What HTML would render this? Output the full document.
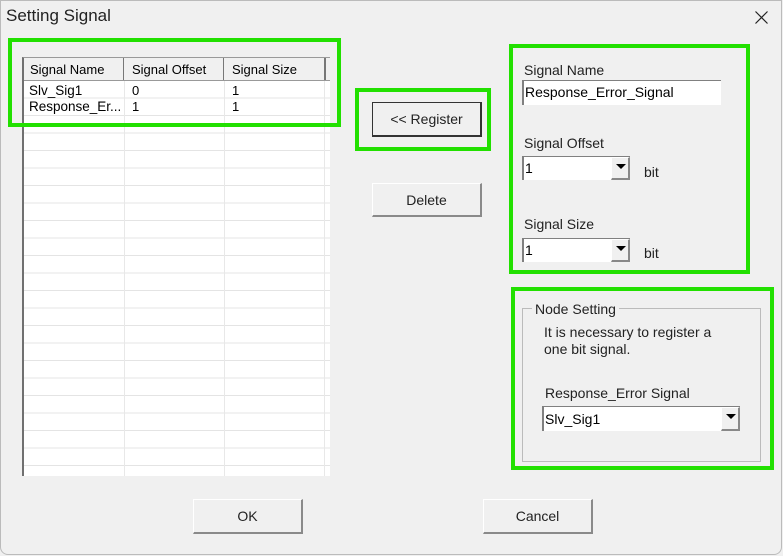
<!DOCTYPE html><html><head><style>
body{margin:0;width:783px;height:556px;background:#f0f0f0;font-family:"Liberation Sans",sans-serif;font-size:13px;color:#000;position:relative;overflow:hidden}
.a{position:absolute}
.g{position:absolute;border:4px solid #22e000;box-sizing:border-box}
.btn{position:absolute;background:#f0f0f0;border-top:1px solid #fff;border-left:1px solid #fff;border-right:2px solid #8a8a8a;border-bottom:2px solid #8a8a8a;box-sizing:border-box;text-align:center;font-size:14px;color:#222}
.inp{position:absolute;background:#fff;border-top:1px solid #808080;border-left:2px solid #808080;box-sizing:border-box;font-size:14px;padding-left:1px}
.dd{position:absolute;right:0;top:0;width:19px;bottom:0;background:#f0f0f0;border:1px solid #fff;border-right:2px solid #888;border-bottom:2px solid #888;box-sizing:border-box}
.dd:after{content:"";position:absolute;left:4px;top:6px;border-left:5px solid transparent;border-right:5px solid transparent;border-top:5px solid #000}
</style></head><body>
<div class="a" style="left:0;top:0;width:782px;height:555px;border:1px solid #bbb;border-radius:0 0 8px 8px;box-sizing:border-box"></div>
<div class="a" style="left:6px;top:6px;font-size:17px;color:#222">Setting Signal</div>
<svg class="a" style="left:755px;top:11px" width="13" height="13"><path d="M0.5 0.5L12.5 12.5M12.5 0.5L0.5 12.5" stroke="#222" stroke-width="1.2"/></svg>

<div class="a" style="left:22px;top:57px;width:308px;height:419px;background:#fff;border-left:2px solid #707070;border-top:1px solid #999;box-sizing:border-box;overflow:hidden">
 <div class="a" style="left:0;top:0;width:306px;height:22px;background:#f0f0f0;border-bottom:1px solid #999"></div>
 <div class="a" style="left:6px;top:4px;font-size:13px">Signal Name</div>
 <div class="a" style="left:108px;top:4px">Signal Offset</div>
 <div class="a" style="left:208px;top:4px">Signal Size</div>
 <div class="a" style="left:99px;top:0;width:1px;height:22px;background:#777"></div>
 <div class="a" style="left:199px;top:0;width:1px;height:22px;background:#777"></div>
 <div class="a" style="left:300px;top:0;width:2px;height:22px;background:#777"></div>
 <div class="a" style="left:0;top:23px;width:306px;height:400px;background:repeating-linear-gradient(#fff 0 16.5px,#e4e4e4 16.5px 17.5px)"></div>
 <div class="a" style="left:100px;top:23px;width:1px;height:400px;background:#e8e8e8"></div>
 <div class="a" style="left:200px;top:23px;width:1px;height:400px;background:#e8e8e8"></div>
 <div class="a" style="left:300px;top:23px;width:1px;height:400px;background:#e8e8e8"></div>
 <div class="a" style="left:5px;top:25px;font-size:13.5px">Slv_Sig1</div>
 <div class="a" style="left:108px;top:25px">0</div>
 <div class="a" style="left:208px;top:25px">1</div>
 <div class="a" style="left:5px;top:41px;font-size:13.5px">Response_Er...</div>
 <div class="a" style="left:108px;top:41px">1</div>
 <div class="a" style="left:208px;top:41px">1</div>
</div>
<div class="g" style="left:8px;top:38px;width:333px;height:89px"></div>

<div class="btn" style="left:372px;top:102px;width:110px;height:35px;line-height:32px;border:1px solid #333;border-right:2px solid #333;border-bottom:2px solid #333">&lt;&lt; Register</div>
<div class="g" style="left:355px;top:88px;width:136px;height:63px"></div>
<div class="btn" style="left:372px;top:183px;width:110px;height:34px;line-height:32px">Delete</div>

<div class="g" style="left:509px;top:44px;width:241px;height:230px"></div>
<div class="a" style="left:524px;top:62px;font-size:14px;color:#222">Signal Name</div>
<div class="inp" style="left:522px;top:80px;width:199px;height:25px;line-height:23px">Response_Error_Signal</div>
<div class="a" style="left:524px;top:135px;font-size:14px;color:#222">Signal Offset</div>
<div class="inp" style="left:522px;top:156px;width:108px;height:24px;line-height:22px">1<div class="dd"></div></div>
<div class="a" style="left:644px;top:164px;font-size:14px;color:#222">bit</div>
<div class="a" style="left:524px;top:216px;font-size:14px;color:#222">Signal Size</div>
<div class="inp" style="left:522px;top:238px;width:108px;height:24px;line-height:22px">1<div class="dd"></div></div>
<div class="a" style="left:644px;top:245px;font-size:14px;color:#222">bit</div>

<div class="a" style="left:522px;top:308px;width:239px;height:154px;border:1px solid #bbb;box-sizing:border-box"></div>
<div class="a" style="left:532px;top:301px;background:#f0f0f0;padding:0 3px;font-size:14px;color:#222">Node Setting</div>
<div class="a" style="left:544px;top:324px;font-size:14px;color:#222;line-height:17px">It is necessary to register a<br>one bit signal.</div>
<div class="a" style="left:545px;top:385px;font-size:14px;color:#222">Response_Error Signal</div>
<div class="inp" style="left:542px;top:406px;width:198px;height:25px;line-height:24px">Slv_Sig1<div class="dd"></div></div>
<div class="g" style="left:511px;top:287px;width:263px;height:183px"></div>

<div class="btn" style="left:193px;top:499px;width:110px;height:35px;line-height:33px">OK</div>
<div class="btn" style="left:483px;top:499px;width:110px;height:35px;line-height:33px">Cancel</div>
</body></html>
